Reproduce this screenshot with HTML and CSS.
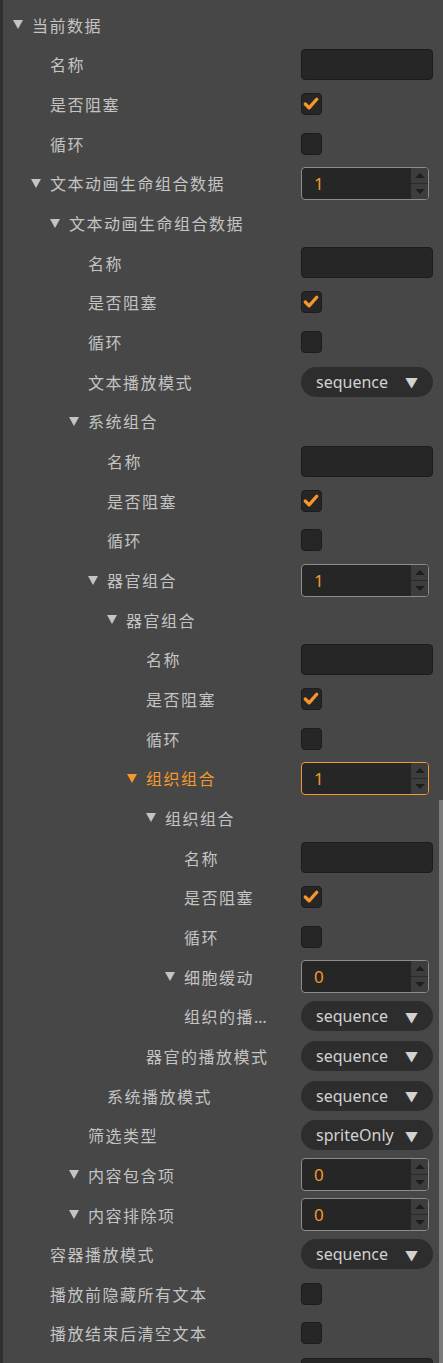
FILE: index.html
```html
<!DOCTYPE html>
<html lang="zh">
<head>
<meta charset="utf-8">
<link rel="stylesheet" href="styles.css">
</head>
<body>
<div class="panel">
  <div class="row p0 fold"><span class="arrow"><svg viewBox="0 0 10 9"><polygon points="0,0 10,0 5,9"/></svg></span><span class="label">当前数据</span></div>
  <div class="row p1"><span class="label">名称</span><span class="text-input"></span></div>
  <div class="row p1"><span class="label">是否阻塞</span><span class="check on"><svg viewBox="0 0 21 22"><polyline points="4.5,11 8.5,15 16.5,6"/></svg></span></div>
  <div class="row p1"><span class="label">循环</span><span class="check"></span></div>
  <div class="row p1 fold"><span class="arrow"><svg viewBox="0 0 10 9"><polygon points="0,0 10,0 5,9"/></svg></span><span class="label">文本动画生命组合数据</span><span class="num"><span class="val">1</span><span class="spin"><i class="up"></i><i class="down"></i></span></span></div>
  <div class="row p2 fold"><span class="arrow"><svg viewBox="0 0 10 9"><polygon points="0,0 10,0 5,9"/></svg></span><span class="label">文本动画生命组合数据</span></div>
  <div class="row p3"><span class="label">名称</span><span class="text-input"></span></div>
  <div class="row p3"><span class="label">是否阻塞</span><span class="check on"><svg viewBox="0 0 21 22"><polyline points="4.5,11 8.5,15 16.5,6"/></svg></span></div>
  <div class="row p3"><span class="label">循环</span><span class="check"></span></div>
  <div class="row p3"><span class="label">文本播放模式</span><span class="select"><span class="sel-text">sequence</span><span class="caret">▼</span></span></div>
  <div class="row p3 fold"><span class="arrow"><svg viewBox="0 0 10 9"><polygon points="0,0 10,0 5,9"/></svg></span><span class="label">系统组合</span></div>
  <div class="row p4"><span class="label">名称</span><span class="text-input"></span></div>
  <div class="row p4"><span class="label">是否阻塞</span><span class="check on"><svg viewBox="0 0 21 22"><polyline points="4.5,11 8.5,15 16.5,6"/></svg></span></div>
  <div class="row p4"><span class="label">循环</span><span class="check"></span></div>
  <div class="row p4 fold"><span class="arrow"><svg viewBox="0 0 10 9"><polygon points="0,0 10,0 5,9"/></svg></span><span class="label">器官组合</span><span class="num"><span class="val">1</span><span class="spin"><i class="up"></i><i class="down"></i></span></span></div>
  <div class="row p5 fold"><span class="arrow"><svg viewBox="0 0 10 9"><polygon points="0,0 10,0 5,9"/></svg></span><span class="label">器官组合</span></div>
  <div class="row p6"><span class="label">名称</span><span class="text-input"></span></div>
  <div class="row p6"><span class="label">是否阻塞</span><span class="check on"><svg viewBox="0 0 21 22"><polyline points="4.5,11 8.5,15 16.5,6"/></svg></span></div>
  <div class="row p6"><span class="label">循环</span><span class="check"></span></div>
  <div class="row p6 fold active"><span class="arrow"><svg viewBox="0 0 10 9"><polygon points="0,0 10,0 5,9"/></svg></span><span class="label">组织组合</span><span class="num focus"><span class="val">1</span><span class="spin"><i class="up"></i><i class="down"></i></span></span></div>
  <div class="row p7 fold"><span class="arrow"><svg viewBox="0 0 10 9"><polygon points="0,0 10,0 5,9"/></svg></span><span class="label">组织组合</span></div>
  <div class="row p8"><span class="label">名称</span><span class="text-input"></span></div>
  <div class="row p8"><span class="label">是否阻塞</span><span class="check on"><svg viewBox="0 0 21 22"><polyline points="4.5,11 8.5,15 16.5,6"/></svg></span></div>
  <div class="row p8"><span class="label">循环</span><span class="check"></span></div>
  <div class="row p8 fold"><span class="arrow"><svg viewBox="0 0 10 9"><polygon points="0,0 10,0 5,9"/></svg></span><span class="label">细胞缓动</span><span class="num"><span class="val">0</span><span class="spin"><i class="up"></i><i class="down"></i></span></span></div>
  <div class="row p8"><span class="label">组织的播放模式</span><span class="select"><span class="sel-text">sequence</span><span class="caret">▼</span></span></div>
  <div class="row p6"><span class="label">器官的播放模式</span><span class="select"><span class="sel-text">sequence</span><span class="caret">▼</span></span></div>
  <div class="row p4"><span class="label">系统播放模式</span><span class="select"><span class="sel-text">sequence</span><span class="caret">▼</span></span></div>
  <div class="row p3"><span class="label">筛选类型</span><span class="select"><span class="sel-text">spriteOnly</span><span class="caret">▼</span></span></div>
  <div class="row p3 fold"><span class="arrow"><svg viewBox="0 0 10 9"><polygon points="0,0 10,0 5,9"/></svg></span><span class="label">内容包含项</span><span class="num"><span class="val">0</span><span class="spin"><i class="up"></i><i class="down"></i></span></span></div>
  <div class="row p3 fold"><span class="arrow"><svg viewBox="0 0 10 9"><polygon points="0,0 10,0 5,9"/></svg></span><span class="label">内容排除项</span><span class="num"><span class="val">0</span><span class="spin"><i class="up"></i><i class="down"></i></span></span></div>
  <div class="row p1"><span class="label">容器播放模式</span><span class="select"><span class="sel-text">sequence</span><span class="caret">▼</span></span></div>
  <div class="row p1"><span class="label">播放前隐藏所有文本</span><span class="check"></span></div>
  <div class="row p1"><span class="label">播放结束后清空文本</span><span class="check"></span></div>
  <div class="row p1"><span class="label">名称</span><span class="text-input"></span></div>
  <div class="scrollbar"></div>
</div>
</body>
</html>
```

FILE: styles.css
```css
html, body {
  margin: 0;
  padding: 0;
  background: #474747;
  height: 100%;
  overflow: hidden;
}

.panel {
  position: relative;
  box-sizing: border-box;
  width: 443px;
  height: 1363px;
  overflow: hidden;
  border-left: 3px solid #303030;
  padding-top: 5px;
  font-family: "Noto Sans", "Noto Sans CJK SC", sans-serif;
  font-size: 16px;
  color: #c4c4c4;
}

.row {
  display: flex;
  align-items: center;
  height: 39.67px;
  padding-right: 10px;
  box-sizing: border-box;
}

.label {
  flex: 1;
  min-width: 0;
  margin-right: 21px;
  white-space: nowrap;
  overflow: hidden;
  text-overflow: ellipsis;
  letter-spacing: 1.5px;
}

.p0 { padding-left: 29px; }
.p1 { padding-left: 47px; }
.p2 { padding-left: 66px; }
.p3 { padding-left: 85px; }
.p4 { padding-left: 104px; }
.p5 { padding-left: 123px; }
.p6 { padding-left: 143px; }
.p7 { padding-left: 162px; }
.p8 { padding-left: 181px; }

.fold.p0 { padding-left: 10px; }
.fold.p1 { padding-left: 28px; }
.fold.p2 { padding-left: 47px; }
.fold.p3 { padding-left: 66px; }
.fold.p4 { padding-left: 85px; }
.fold.p5 { padding-left: 104px; }
.fold.p6 { padding-left: 124px; }
.fold.p7 { padding-left: 143px; }
.fold.p8 { padding-left: 162px; }

.arrow {
  flex: none;
  width: 10px;
  height: 9px;
  margin-right: 9px;
  display: flex;
}
.arrow svg { width: 10px; height: 9px; fill: #c4c4c4; }

.active .label { color: #f39a2c; }
.active .arrow svg { fill: #f39a2c; }

.text-input {
  flex: none;
  box-sizing: border-box;
  width: 132px;
  height: 31px;
  background: #262626;
  border: 1px solid #1c1c1c;
  border-radius: 4px;
}

.check {
  flex: none;
  box-sizing: border-box;
  width: 21px;
  height: 22px;
  margin-right: 111px;
  background: #262626;
  border: 1px solid #1c1c1c;
  border-radius: 4px;
  display: flex;
}
.check svg {
  width: 21px;
  height: 22px;
  fill: none;
  stroke: #f7962a;
  stroke-width: 3.5;
  stroke-linecap: round;
  stroke-linejoin: round;
  margin: -1px 0 0 -1px;
}

.num {
  flex: none;
  box-sizing: border-box;
  width: 128px;
  height: 33px;
  margin-right: 4px;
  background: #262626;
  border: 1px solid #8c8c8c;
  border-radius: 4px;
  display: flex;
  overflow: hidden;
}
.num.focus { border-color: #f39a2c; }
.val {
  flex: 1;
  padding-left: 12px;
  color: #f39a2c;
  font-family: "Noto Sans", sans-serif;
  font-size: 17px;
  line-height: 31px;
}
.spin {
  flex: none;
  width: 17px;
  background: #3d3d3d;
  display: flex;
  flex-direction: column;
}
.spin i {
  flex: 1;
  display: flex;
  align-items: center;
  justify-content: center;
}
.spin i.up { border-bottom: 1px solid #2b2b2b; }
.spin i.up::before {
  content: "";
  border-left: 5px solid transparent;
  border-right: 5px solid transparent;
  border-bottom: 5px solid #1e1e1e;
}
.spin i.down::before {
  content: "";
  border-left: 5px solid transparent;
  border-right: 5px solid transparent;
  border-top: 5px solid #1e1e1e;
}

.select {
  flex: none;
  box-sizing: border-box;
  width: 132px;
  height: 30px;
  background: #2d2d2d;
  border-radius: 15px;
  display: flex;
  align-items: center;
  padding: 0 15px 0 15px;
  color: #d2d2d2;
}
.sel-text {
  flex: 1;
  font-family: "Noto Sans", sans-serif;
  font-size: 16px;
}
.caret {
  font-size: 13px;
  color: #d2d2d2;
}

.scrollbar {
  position: absolute;
  left: 436px;
  top: 800px;
  width: 4px;
  height: 563px;
  background: #7b7b7b;
}
```
